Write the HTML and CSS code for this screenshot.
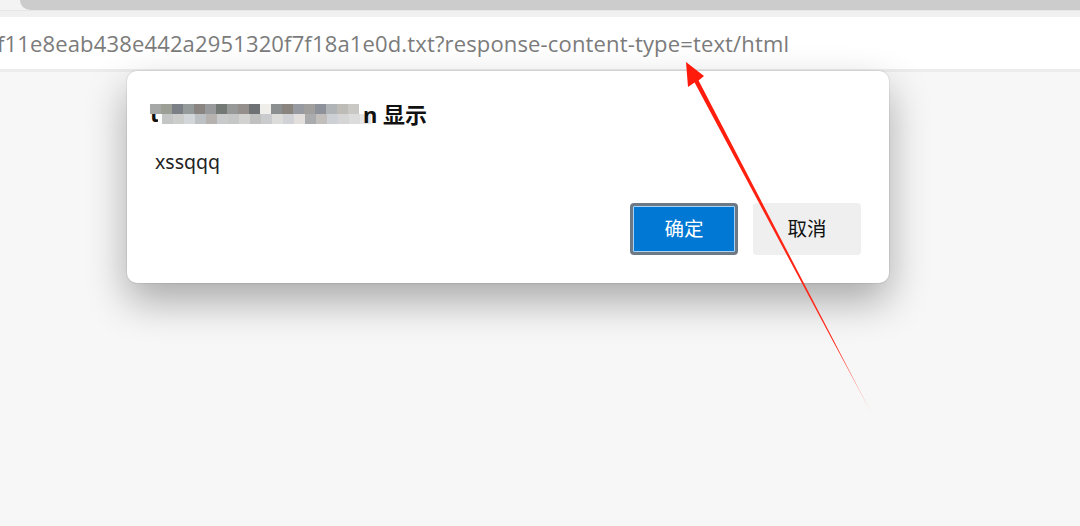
FILE: index.html
```html
<!DOCTYPE html>
<html lang="zh-CN">
<head>
<meta charset="utf-8">
<title>alert</title>
<link rel="stylesheet" href="styles.css">
</head>
<body>
<div class="browser">
  <div class="tabstrip">
    <div class="tab-gap"></div>
    <div class="tab"></div>
  </div>
  <div class="toolbar-strip"></div>
  <div class="addressbar">
    <span class="url">f11e8eab438e442a2951320f7f18a1e0d.txt?response-content-type=text/html</span>
  </div>
  <div class="addressbar-edge"></div>
  <main class="page">
    <div class="dialog">
      <div class="dialog-title">
        <span class="t-first">t</span><span class="mosaic"><span class="row"><i style="background:#a5a8a6"></i><i style="background:#9c9f95"></i><i style="background:#7b7f86"></i><i style="background:#959b9b"></i><i style="background:#8b8581"></i><i style="background:#989a9c"></i><i style="background:#737a75"></i><i style="background:#969998"></i><i style="background:#948f8c"></i><i style="background:#6e7275"></i><i style="background:#efeeea"></i><i style="background:#8c8f90"></i><i style="background:#8a847f"></i><i style="background:#979aa0"></i><i style="background:#a09f9e"></i><i style="background:#8d929a"></i><i style="background:#b1b4b6"></i><i style="background:#bdbcb6"></i><i style="background:#c9c8c4"></i><i style="background:#ffffff"></i></span><span class="row lower"><i style="background:#c3c6c5"></i><i style="background:#cbcdcb"></i><i style="background:#d3d6d9"></i><i style="background:#bec1c3"></i><i style="background:#b6b2b0"></i><i style="background:#c8cacc"></i><i style="background:#c4c7c6"></i><i style="background:#d2d2d0"></i><i style="background:#bfc0bf"></i><i style="background:#c9cbcd"></i><i style="background:#dcdcda"></i><i style="background:#d0d2d5"></i><i style="background:#e3dfdc"></i><i style="background:#aaabac"></i><i style="background:#c1bebb"></i><i style="background:#cdd1d6"></i><i style="background:#d4d5d4"></i><i style="background:#dcdcdc"></i><i style="background:#e6e6e6"></i></span></span><span class="t-rest">n 显示</span>
      </div>
      <div class="dialog-message">xssqqq</div>
      <div class="dialog-actions">
        <button class="btn btn-primary">确定</button>
        <button class="btn btn-secondary">取消</button>
      </div>
    </div>
  </main>
  <svg class="annotation" width="1080" height="526" viewBox="0 0 1080 526" aria-hidden="true">
    <defs>
      <linearGradient id="fade" x1="686" y1="62" x2="874" y2="418" gradientUnits="userSpaceOnUse">
        <stop offset="0" stop-color="#ff1a0a"/>
        <stop offset="0.78" stop-color="#ff2a1a"/>
        <stop offset="1" stop-color="#ff2a1a" stop-opacity="0.15"/>
      </linearGradient>
    </defs>
    <polygon points="686,62 704,76 698.6,80.5 874,418 694.6,82.5 688,87" fill="url(#fade)"/>
  </svg>
</div>
</body>
</html>
```
FILE: styles.css
```css
* { box-sizing: border-box; }
html, body {
  margin: 0;
  padding: 0;
  width: 1080px;
  height: 526px;
  overflow: hidden;
  background: #f7f7f7;
  font-family: "Noto Sans", "Noto Sans CJK SC", sans-serif;
}
.browser {
  position: relative;
  width: 1080px;
  height: 526px;
}
.tabstrip {
  display: flex;
  height: 10px;
  background: #f3f3f3;
}
.tab-gap { width: 20px; }
.tab {
  flex: 1;
  background: #cccccc;
  border-bottom-left-radius: 10px;
}
.toolbar-strip {
  height: 7px;
  background: #f0f0f0;
  border-top: 1px solid #e6e6e6;
}
.addressbar {
  height: 52px;
  background: #ffffff;
  display: flex;
  align-items: center;
  overflow: hidden;
  white-space: nowrap;
}
.url {
  margin-left: -3px;
  font-family: "Open Sans", "Noto Sans", sans-serif;
  font-size: 22px;
  color: #7b7b7b;
  letter-spacing: 0.15px;
}
.addressbar-edge {
  height: 3px;
  background: #ececec;
}
.page {
  padding-left: 127px;
}
.dialog {
  width: 762px;
  height: 212px;
  margin-top: -1px;
  background: #ffffff;
  border-radius: 10px;
  box-shadow: 0 0 0 1px rgba(0,0,0,0.06), 0 18px 40px rgba(0,0,0,0.32);
  padding: 22px 28px 28px 23px;
  display: flex;
  flex-direction: column;
}
.dialog-title {
  display: flex;
  align-items: center;
  height: 40px;
  font-size: 22px;
  font-weight: 700;
  color: #111;
  font-family: "Noto Sans", "Noto Sans CJK SC", sans-serif;
}
.t-first { width: 8px; overflow: hidden; }
.mosaic {
  display: inline-flex;
  flex-direction: column;
  margin-left: -8px;
  margin-right: -8px;
  margin-top: 2px;
}
.mosaic .row { display: flex; }
.mosaic .lower { padding-left: 12px; }
.mosaic i {
  display: block;
  width: 11px;
  height: 10px;
}
.t-rest { margin-left: 0; }
.dialog-message {
  margin-top: 15px;
  padding-left: 5px;
  font-size: 19.5px;
  color: #222;
  font-family: "Noto Sans", sans-serif;
}
.dialog-actions {
  margin-top: auto;
  display: flex;
  justify-content: flex-end;
  gap: 15px;
}
.btn {
  width: 108px;
  height: 52px;
  padding: 0 0 3px;
  border-radius: 4px;
  font-family: "Noto Sans CJK SC", sans-serif;
  font-size: 19.5px;
  cursor: pointer;
}
.btn-primary {
  background: #0078d4;
  color: #ffffff;
  border: 3px solid #6d7a86;
  box-shadow: inset 0 0 0 1px #a9d2f3;
}
.btn-secondary {
  background: #efefef;
  color: #111;
  border: none;
}
.annotation {
  position: absolute;
  left: 0;
  top: 0;
  pointer-events: none;
}
```
